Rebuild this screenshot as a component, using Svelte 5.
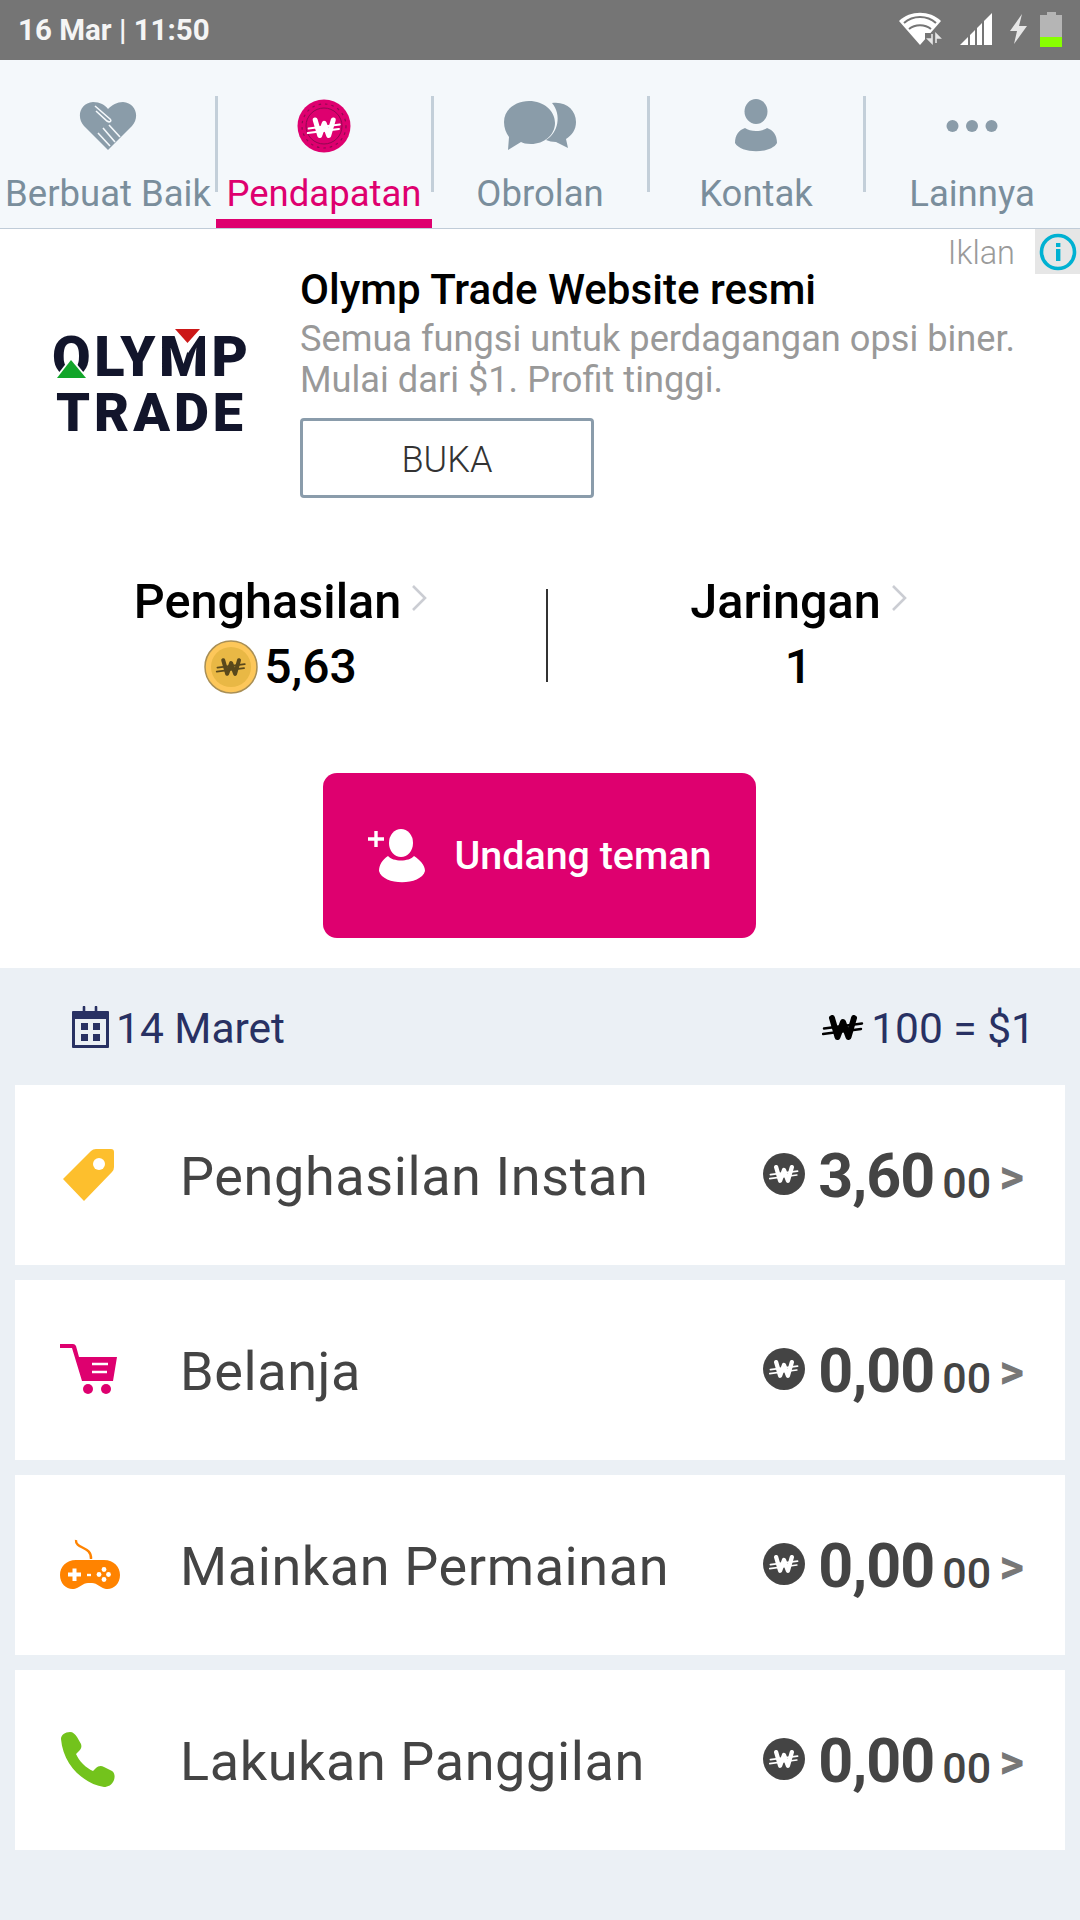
<script>
	const tabs = ['Berbuat Baik', 'Pendapatan', 'Obrolan', 'Kontak', 'Lainnya'];
	const rows = [
		{ label: 'Penghasilan Instan', value: '3,60', icon: 'tag' },
		{ label: 'Belanja', value: '0,00', icon: 'cart' },
		{ label: 'Mainkan Permainan', value: '0,00', icon: 'game' },
		{ label: 'Lakukan Panggilan', value: '0,00', icon: 'phone' }
	];
</script>

{#snippet wuh(color, size)}
	<svg width={size} height={size * 0.62} viewBox="0 0 42 26">
		<path d="M10 3 L15.5 22 L21 7 L26.5 22 L32 3" fill="none" stroke={color} stroke-width="6" stroke-linejoin="round" stroke-linecap="round" />
		<path d="M2 13.5 L40 8.5 M1 19 L39 14" fill="none" stroke={color} stroke-width="2.4" stroke-linecap="round" />
	</svg>
{/snippet}

{#snippet tabIcon(i)}
	{#if i === 0}
		<svg width="58" height="48" viewBox="0 0 58 48">
			<path d="M29 48 L5 24 C-3 15 1 1 14 0 C21 0 26 3 29 7 C33 3 38 0 44 0 C57 1 61 15 53 24 Z" fill="#8a9ca9" />
			<path d="M16 4 L31 17 C33 19 31 21 28 19 L17 9 M24 26 L36 40 M19 31 L31 44 M30 23 L41 35" fill="none" stroke="#f4f8fb" stroke-width="1.6" />
		</svg>
	{:else if i === 1}
		<svg width="54" height="54" viewBox="0 0 54 54">
			<circle cx="27" cy="27" r="26.5" fill="#de006f" />
			<circle cx="27" cy="27" r="22" fill="none" stroke="#8f0a50" stroke-width="1.2" stroke-dasharray="2.5 4" />
			<circle cx="27" cy="27" r="18" fill="none" stroke="#8f0a50" stroke-width="1" />
			<g transform="translate(10 18.5) scale(.82)">
				<path d="M10 3 L15.5 22 L21 7 L26.5 22 L32 3" fill="none" stroke="#fff" stroke-width="6" stroke-linejoin="round" stroke-linecap="round" />
				<path d="M2 13.5 L40 8.5 M1 19 L39 14" fill="none" stroke="#fff" stroke-width="2.4" stroke-linecap="round" />
			</g>
		</svg>
	{:else if i === 2}
		<svg width="72" height="50" viewBox="0 0 72 50">
			<path d="M48 2 C62 0 72 9 72 21 C72 29 68 34 62 38 L64 47 L52 41 C48 41 45 40 42 39 C54 32 58 14 48 2 Z" fill="#8a9ca9" />
			<path d="M25 0 C40 0 51 10 51 22 C51 34 40 43 27 43 C22 43 19 42 17 41 L4 49 L5 36 C2 32 0 27 0 21 C0 9 11 0 25 0 Z" fill="#8a9ca9" />
		</svg>
	{:else if i === 3}
		<svg width="42" height="54" viewBox="0 0 42 54">
			<ellipse cx="21" cy="12.5" rx="11.5" ry="12.5" fill="#8a9ca9" />
			<path d="M10 29 C15 33 27 33 32 29 C38 31 42 36 42 44 C36 55 6 55 0 44 C0 36 4 31 10 29 Z" fill="#8a9ca9" />
		</svg>
	{:else}
		<svg width="52" height="14" viewBox="0 0 52 14">
			<circle cx="6.5" cy="7" r="6" fill="#8a9ca9" />
			<circle cx="26" cy="7" r="6" fill="#8a9ca9" />
			<circle cx="45.5" cy="7" r="6" fill="#8a9ca9" />
		</svg>
	{/if}
{/snippet}

{#snippet rowIcon(name)}
	{#if name === 'tag'}
		<svg class="tag" width="52" height="52" viewBox="0 0 52 52">
			<path d="M0 30 L28 2 Q30 0 33 0 L48 0 Q51 0 51 3 L51 18 Q51 21 49 23 L21 52 Z" fill="#fdbf2d" />
			<circle cx="36" cy="15" r="6" fill="#fff" />
		</svg>
	{:else if name === 'cart'}
		<svg width="58" height="52" viewBox="0 0 58 52">
			<path d="M0 0 H13 Q15 0 16 2 L19 13 H57 L53 37 H22 L12 4 H0 Z" fill="#de006f" />
			<path d="M32 20 H48 M32 28 H47" stroke="#fff" stroke-width="2.6" />
			<circle cx="28" cy="45" r="5" fill="#de006f" />
			<circle cx="46" cy="45" r="5" fill="#de006f" />
		</svg>
	{:else if name === 'game'}
		<svg width="60" height="52" viewBox="0 0 60 52">
			<path d="M16 21 H44 C54 21 60 28 60 36 C60 45 53 51 46 50 C41 49 37 44 32 44 H28 C23 44 19 49 14 50 C7 51 0 45 0 36 C0 28 6 21 16 21 Z" fill="#ff8300" />
			<path d="M16 1 C15 10 32 7 31 20" fill="none" stroke="#ff8300" stroke-width="2.4" />
			<path d="M12.5 29.500 H16.500 V33.500 H21 V37.500 H16.500 V42 H12.500 V37.500 H8 V33.500 H12.500 Z" fill="#fff" />
			<path d="M27 36 H31" stroke="#fff" stroke-width="2.4" />
			<circle cx="44" cy="30.500" r="2.400" fill="#fff" />
			<circle cx="44" cy="40.500" r="2.400" fill="#fff" />
			<circle cx="39" cy="35.500" r="2.400" fill="#fff" />
			<circle cx="48.500" cy="35.500" r="2.400" fill="#fff" />
		</svg>
	{:else}
		<svg width="56" height="56" viewBox="0 0 56 56">
			<path d="M1 7 C1 3 5 0 10 0 C13 0 15 2 17 5 L21 12 C22 15 21 17 19 19 L16 22 C19 29 26 36 33 39 L36 36 C38 34 41 33 44 35 L52 39 C55 41 55 45 54 48 C52 53 48 55 44 55 C24 52 3 33 1 7 Z" fill="#73c31c" />
		</svg>
	{/if}
{/snippet}

<div class="page">
	<header class="status">
		<span class="clock">16 Mar | 11:50</span>
		<div class="status-icons">
			<svg width="44" height="33" viewBox="0 0 44 33">
				<path d="M0 9 C11 -2 31 -2 42 9 L21 33 Z" fill="#fff" />
				<path d="M5 11 C14 3 28 3 37 11 M10 17 C16 12 26 12 32 17" fill="none" stroke="#757575" stroke-width="2" />
				<path d="M26 33 V21 H44 V33 Z" fill="#757575" />
				<path d="M33 22 V31 L29 27 H33 M37 31 V22 L41 26 H37" fill="#e6e6e6" stroke="#e6e6e6" stroke-width="1.6" />
			</svg>
			<svg class="signal" width="32" height="33" viewBox="0 0 32 33">
				<path d="M0 33 L8 25 V33 Z M10 23 L15 18 V33 H10 Z M17 16 L22 11 V33 H17 Z M24 9 L32 1 V33 H24 Z" fill="#fff" />
			</svg>
			<svg class="bolt" width="17" height="30" viewBox="0 0 17 30">
				<path d="M12 0 L0 17 H7 L4 30 L17 12 H9 Z" fill="#e6e6e6" />
			</svg>
			<div class="battery"><div class="battery-cap"></div><div class="battery-body"><div class="battery-fill"></div></div></div>
		</div>
	</header>

	<nav class="tabs">
		{#each tabs as tab, i}
			<div class="tab" class:active={i === 1}>
				<div class="tab-icon">{@render tabIcon(i)}</div>
				<span>{tab}</span>
			</div>
		{/each}
	</nav>

	<section class="ad">
		<div class="ad-flag">
			<span class="ad-label">Iklan</span>
			<div class="ad-info">
				<svg width="38" height="38" viewBox="0 0 38 38">
					<circle cx="19" cy="19" r="16.5" fill="none" stroke="#00b1d2" stroke-width="3.6" />
					<rect x="17" y="16" width="4.4" height="12" fill="#00b1d2" />
					<rect x="17" y="10" width="4.4" height="4" fill="#00b1d2" />
				</svg>
			</div>
		</div>
		<svg class="ad-logo" width="220" height="130" viewBox="0 0 220 130">
			<text class="logo-text">
				<tspan x="12" y="55" font-size="56" textLength="196" lengthAdjust="spacing">OLYMP</tspan>
				<tspan x="16" y="110" font-size="54" textLength="187" lengthAdjust="spacing">TRADE</tspan>
			</text>
			<path d="M128 2 L168 2 L148 32 Z" fill="#fff" />
			<path d="M135 8 H160 L147.5 22 Z" fill="#cc1818" />
			<path d="M14 58 L31 36 L49 58 Z" fill="#fff" />
			<path d="M17 57 L31 39 L46 57 Z" fill="#12a52a" />
		</svg>
		<div class="ad-copy">
			<h2>Olymp Trade Website resmi</h2>
			<p>Semua fungsi untuk perdagangan opsi biner.<br />Mulai dari $1. Profit tinggi.</p>
			<div class="ad-button">BUKA</div>
		</div>
	</section>

	<section class="stats">
		<div class="stat stat-left">
			<div class="stat-head">Penghasilan<svg class="chev" width="16" height="28" viewBox="0 0 16 28"><path d="M2 2 L14 14 L2 26" fill="none" stroke="#cbcdd3" stroke-width="2.6" /></svg></div>
			<div class="stat-value">
				<svg class="coin" width="54" height="54" viewBox="0 0 54 54">
					<circle cx="27" cy="27" r="26" fill="#fdc75a" stroke="#a98f55" stroke-width="1.5" />
					<circle cx="27" cy="27" r="20" fill="#e9b845" />
					<g transform="translate(12 18) scale(.72)">
						<path d="M10 3 L15.5 22 L21 7 L26.5 22 L32 3" fill="none" stroke="#59481c" stroke-width="5.5" stroke-linejoin="round" stroke-linecap="round" />
						<path d="M2 13.5 L40 8.5 M1 19 L39 14" fill="none" stroke="#59481c" stroke-width="2.4" stroke-linecap="round" />
					</g>
				</svg>
				5,63
			</div>
		</div>
		<div class="divider"></div>
		<div class="stat stat-right">
			<div class="stat-head">Jaringan<svg class="chev" width="16" height="28" viewBox="0 0 16 28"><path d="M2 2 L14 14 L2 26" fill="none" stroke="#cbcdd3" stroke-width="2.6" /></svg></div>
			<div class="stat-value">1</div>
		</div>
	</section>

	<div class="invite-wrap">
		<div class="invite">
			<svg width="58" height="54" viewBox="0 0 58 54">
				<path d="M1 10 H17 M9 2 V18" stroke="#fff" stroke-width="3.4" />
				<ellipse cx="34" cy="14" rx="12" ry="14" fill="#fff" />
				<path d="M21 27 C26 33 42 33 47 27 C53 31 58 36 58 42 C54 57 16 57 12 42 C12 36 15 31 21 27 Z" fill="#fff" />
			</svg>
			<span>Undang teman</span>
		</div>
	</div>

	<main class="earnings">
		<div class="rate-row">
			<div class="rate-item">
				<svg width="37" height="42" viewBox="0 0 37 42">
					<path d="M0 6 Q0 5 1 5 H36 Q37 5 37 6 V41 Q37 42 36 42 H1 Q0 42 0 41 Z" fill="#283163" />
					<rect x="3" y="13" width="31" height="26" fill="#ebf0f5" />
					<rect x="9" y="17" width="7" height="7" fill="#283163" />
					<rect x="21" y="17" width="7" height="7" fill="#283163" />
					<rect x="9" y="28" width="7" height="7" fill="#283163" />
					<rect x="21" y="28" width="7" height="7" fill="#283163" />
					<path d="M12 1 V8 M24 1 V8" stroke="#283163" stroke-width="2.6" stroke-linecap="round" />
				</svg>
				<span>14 Maret</span>
			</div>
			<div class="rate-item rate-value">
				{@render wuh('#000', 42)}
				<span>100 = $1</span>
			</div>
		</div>
		<div class="rows">
			{#each rows as row}
				<div class="row">
					<div class="row-icon">{@render rowIcon(row.icon)}</div>
					<span class="row-label">{row.label}</span>
					<div class="row-amount">
						<span class="row-coin">{@render wuh('#fff', 30)}</span>
						<span class="row-value">{row.value}</span>
						<span class="row-cents">00</span>
						<span class="row-arrow">&gt;</span>
					</div>
				</div>
			{/each}
		</div>
	</main>
</div>

<style>
	:global(body) {
		margin: 0;
		background: #ebf0f5;
	}

	.page {
		width: 1080px;
		height: 1920px;
		overflow: hidden;
		display: flex;
		flex-direction: column;
		background: #fff;
		font-family: Roboto, 'Liberation Sans', sans-serif;
	}

	.status {
		height: 60px;
		background: #757575;
		display: flex;
		align-items: center;
		justify-content: space-between;
		padding: 0 18px 0 18px;
		box-sizing: border-box;
	}

	.clock {
		color: #f5f5f5;
		font-size: 29.5px;
		font-weight: 700;
	}

	.status-icons {
		display: flex;
		align-items: flex-start;
		height: 36px;
		margin-top: -1px;
	}

	.signal {
		margin-left: 17px;
	}

	.bolt {
		margin-left: 18px;
		margin-top: 2px;
	}

	.battery {
		margin-left: 13px;
		width: 22px;
		display: flex;
		flex-direction: column;
		align-items: center;
	}

	.battery-cap {
		width: 9px;
		height: 3px;
		background: #b5b5b5;
	}

	.battery-body {
		width: 22px;
		height: 32px;
		background: #b5b5b5;
		display: flex;
		align-items: flex-end;
	}

	.battery-fill {
		width: 100%;
		height: 10px;
		background: #88ff00;
	}

	.tabs {
		height: 169px;
		display: flex;
		background: #f4f8fb;
		border-bottom: 1px solid #c0ccd8;
		box-sizing: border-box;
	}

	.tab {
		position: relative;
		width: 216px;
		display: flex;
		flex-direction: column;
		align-items: center;
		color: #7a8e9c;
		font-size: 36.5px;
		white-space: nowrap;
	}

	.tab:not(:last-child)::after {
		content: '';
		position: absolute;
		right: -2px;
		top: 36px;
		width: 3px;
		height: 96px;
		background: #c3cfd9;
	}

	.tab.active {
		color: #de006f;
	}

	.tab.active::before {
		content: '';
		position: absolute;
		left: 0;
		right: 0;
		bottom: 0;
		height: 9px;
		background: #de006f;
	}

	.tab-icon {
		height: 56px;
		margin-top: 38px;
		margin-bottom: 19px;
		display: flex;
		align-items: center;
		justify-content: center;
	}

	.tab span {
		line-height: 42px;
	}

	.ad {
		position: relative;
		display: flex;
		height: 300px;
		padding-left: 40px;
		box-sizing: border-box;
	}

	.ad-flag {
		position: absolute;
		top: 0;
		right: 0;
		display: flex;
		align-items: flex-start;
	}

	.ad-label {
		color: #9a9a9a;
		font-size: 32.5px;
		font-weight: 300;
		margin: 5px 20px 0 0;
	}

	.ad-info {
		width: 45px;
		height: 45px;
		background: #e6e6e6;
		display: flex;
		align-items: center;
		justify-content: center;
	}

	.ad-logo {
		margin: 92px 40px 0 0;
		flex: none;
	}

	.logo-text {
		font-family: Roboto, sans-serif;
		font-weight: 900;
		fill: #12152b;
	}

	.ad-copy {
		padding-top: 36px;
	}

	.ad-copy h2 {
		margin: 0;
		font-size: 42.1px;
		font-weight: 500;
		line-height: 50px;
		color: #000;
	}

	.ad-copy p {
		margin: 3px 0 0;
		font-size: 36.2px;
		line-height: 41px;
		color: #999;
	}

	.ad-button {
		margin-top: 18px;
		width: 294px;
		height: 80px;
		box-sizing: border-box;
		border: 3px solid #8a9cab;
		border-radius: 4px;
		display: flex;
		align-items: center;
		justify-content: center;
		padding-top: 4px;
		font-size: 36px;
		font-weight: 300;
		color: #333;
	}

	.stats {
		display: flex;
		height: 130px;
		margin-top: 43px;
	}

	.stat {
		display: flex;
		flex-direction: column;
		align-items: center;
		color: #000;
		font-weight: 500;
	}

	.stat-left {
		width: 546px;
		padding-left: 15px;
		box-sizing: border-box;
	}

	.divider {
		width: 2px;
		height: 93px;
		margin-top: 17px;
		background: #333;
	}

	.stat-right {
		flex: 1;
		padding-right: 31px;
	}

	.stat-head {
		display: flex;
		align-items: center;
		gap: 10px;
		font-size: 48.6px;
		line-height: 60px;
	}

	.chev {
		margin-top: -8px;
	}

	.stat-value {
		display: flex;
		align-items: center;
		gap: 6px;
		font-size: 48px;
		line-height: 70px;
	}

	.invite-wrap {
		display: flex;
		justify-content: center;
		margin-top: 71px;
		padding-right: 2px;
	}

	.invite {
		width: 433px;
		height: 165px;
		background: #de006f;
		border-radius: 14px;
		display: flex;
		align-items: center;
		justify-content: center;
		gap: 30px;
		color: #fff;
		font-size: 39.4px;
		font-weight: 500;
	}

	.earnings {
		flex: 1;
		margin-top: 30px;
		background: #ebf0f5;
	}

	.rate-row {
		height: 117px;
		display: flex;
		align-items: center;
		justify-content: space-between;
		padding: 0 45px 0 72px;
		color: #283163;
		font-size: 42.5px;
	}

	.rate-item {
		display: flex;
		align-items: center;
		gap: 7px;
	}

	.rate-item span {
		margin-top: 4px;
	}

	.rate-value svg {
		margin-top: 4px;
	}

	.rows {
		display: flex;
		flex-direction: column;
		gap: 15px;
		padding: 0 15px;
	}

	.row {
		height: 180px;
		background: #fff;
		display: flex;
		align-items: center;
		padding: 0 41px 0 45px;
		color: #444;
	}

	.row-icon {
		width: 120px;
		display: flex;
		flex: none;
	}

	.tag {
		margin-left: 3px;
	}

	.row-label {
		flex: 1;
		font-size: 54px;
		letter-spacing: 0.6px;
		padding-top: 2px;
	}

	.row-amount {
		display: flex;
		align-items: baseline;
		padding-top: 2px;
	}

	.row-coin {
		width: 42px;
		height: 42px;
		border-radius: 50%;
		background: #444;
		display: flex;
		align-items: center;
		justify-content: center;
		align-self: center;
		margin-right: 13px;
		margin-top: -4px;
	}

	.row-value {
		font-size: 61px;
		font-weight: 700;
		letter-spacing: -1px;
	}

	.row-cents {
		font-size: 43px;
		font-weight: 500;
		margin-left: 8px;
		position: relative;
		top: 1px;
	}

	.row-arrow {
		font-size: 48px;
		font-weight: 700;
		color: #777;
		margin-left: 8px;
		position: relative;
		top: -4px;
	}
</style>
